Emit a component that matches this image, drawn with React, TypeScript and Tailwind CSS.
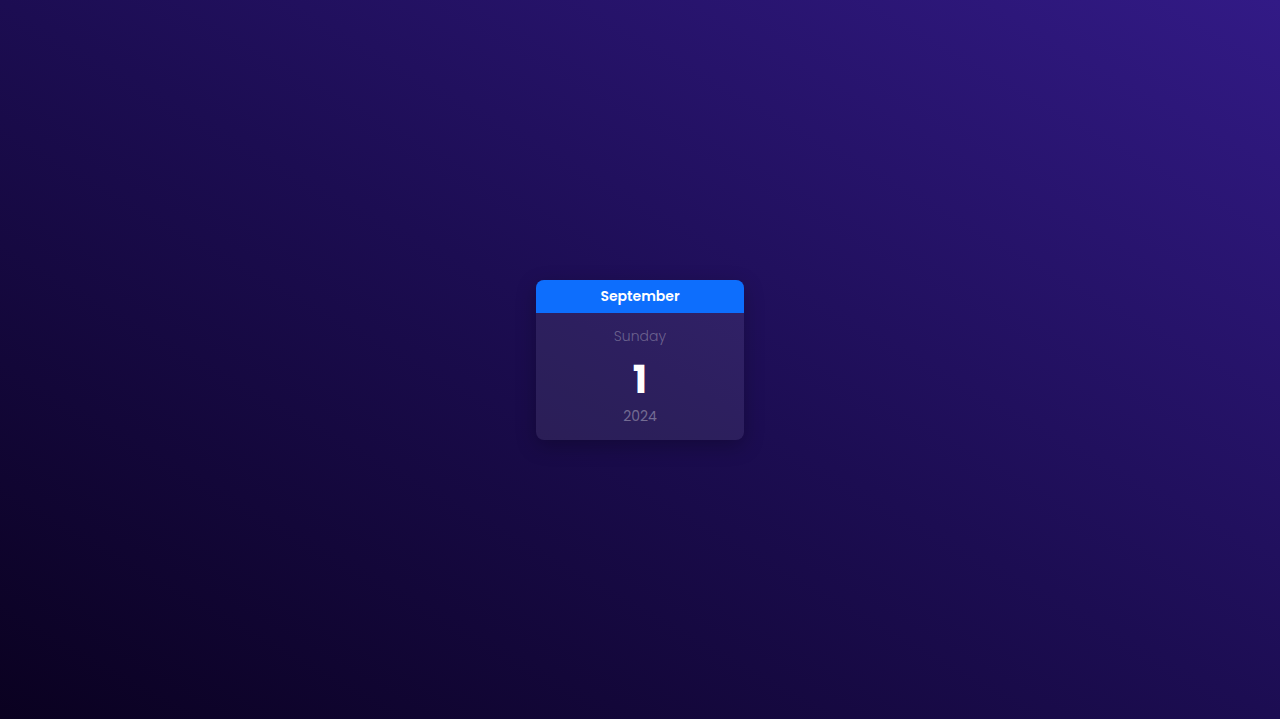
export default function App() {
  return (
    <div className="flex h-[719px] w-full items-center justify-center bg-[linear-gradient(to_top_right,#0a0120,#1c0d52_50%,#321a86)] font-['Poppins','Inter',sans-serif]">
      <div className="w-[208px] overflow-hidden rounded-lg bg-white/[0.08] text-center shadow-[0_6px_20px_rgba(0,0,0,0.25)]">
        <div className="flex h-[33px] items-center justify-center bg-[#0d6efd] text-sm font-semibold text-white">
          September
        </div>
        <div className="flex flex-col items-center pb-[14px] pt-[13px]">
          <div className="text-sm font-light leading-5 text-white/30">Sunday</div>
          <div className="mt-[12px] text-[38px] font-bold leading-[44px] text-white">1</div>
          <div className="mt-[4px] text-sm leading-5 text-white/35">2024</div>
        </div>
      </div>
    </div>
  );
}
